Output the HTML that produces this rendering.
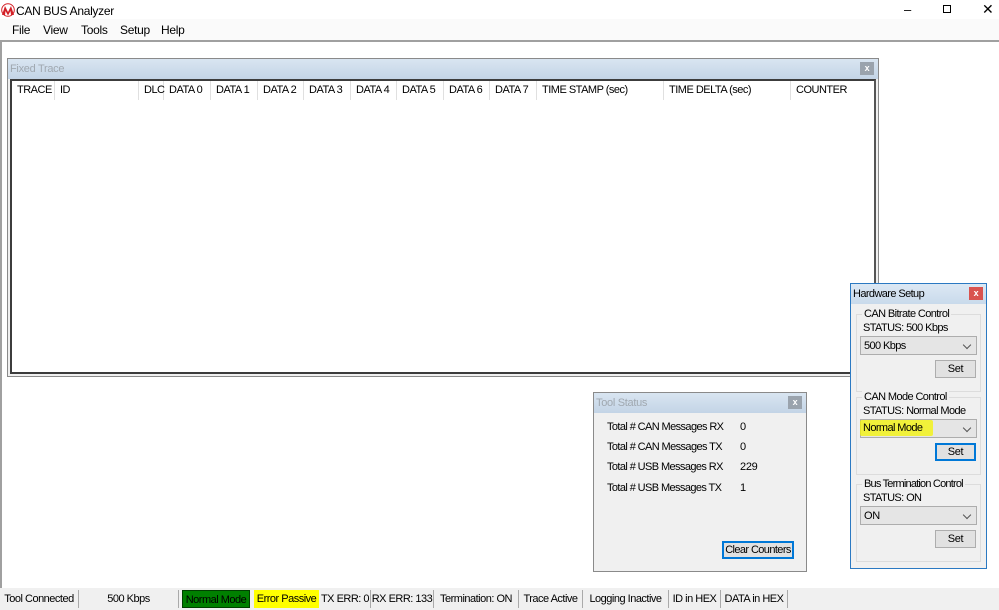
<!DOCTYPE html>
<html><head><meta charset="utf-8"><style>
*{margin:0;padding:0;box-sizing:border-box}
body{width:999px;height:610px;position:relative;overflow:hidden;background:#fff;font-family:"Liberation Sans",sans-serif;font-size:11px;color:#000;letter-spacing:-0.3px}
div{white-space:nowrap}
.a{position:absolute;white-space:nowrap}
.win{position:absolute;background:#f0f0f0;border:1px solid #8a8a8a}
.tb{position:absolute;left:0;right:0;top:0;height:20px;background:linear-gradient(#d9e5f1,#c3d4e6);}
.tb span{position:absolute;left:2px;top:4px;font-size:11px}
.xb{position:absolute;top:3px;width:14px;height:13px;background:#9aa3ad;color:#fff;font-size:9px;text-align:center;line-height:12px;font-weight:bold}
.btn{position:absolute;background:#e1e1e1;border:1px solid #adadad;text-align:center;font-size:11px;line-height:19px}
.sel{position:absolute;background:#e5e5e5;border:1px solid #adadad;font-size:11px;line-height:18px;padding-left:3px}
.sel:after{content:"";position:absolute;right:6px;top:5px;width:5px;height:5px;border-right:1px solid #555;border-bottom:1px solid #555;transform:rotate(45deg)}
.grp{position:absolute;border:1px solid #dcdcdc}
.hd{position:absolute;top:0;height:19px;border-right:1px solid #e0e0e0;line-height:19px;padding-left:5px;font-size:11px;letter-spacing:-0.5px}
.sb{position:absolute;top:590px;height:18px;line-height:18px;font-size:11px;border-right:1px solid #aaa;text-align:center;letter-spacing:-0.5px}
.hw{letter-spacing:-0.6px}
</style></head><body>
<svg class="a" style="left:1px;top:3px" width="14" height="14" viewBox="0 0 14 14"><path d="M1 12 L4 3 L7 9 L10 3 L13 12 L10 12 L9.5 8 L7 12.5 L4.5 8 L4 12 Z" fill="#d32027"/><circle cx="7" cy="7" r="6.3" fill="none" stroke="#d32027" stroke-width="1"/></svg>
<div class="a" style="left:16px;top:4px;font-size:12px">CAN BUS Analyzer</div>
<div class="a" style="left:904px;top:2px;font-size:13px">–</div>
<div class="a" style="left:943px;top:5px;width:8px;height:8px;border:1px solid #000"></div>
<div class="a" style="left:982px;top:1px;font-size:14px">✕</div>
<div class="a" style="left:0;top:19px;width:999px;height:21px;background:#fafafa"></div>
<div class="a" style="left:12px;top:23px;font-size:12px">File</div>
<div class="a" style="left:43px;top:23px;font-size:12px">View</div>
<div class="a" style="left:81px;top:23px;font-size:12px">Tools</div>
<div class="a" style="left:120px;top:23px;font-size:12px">Setup</div>
<div class="a" style="left:161px;top:23px;font-size:12px">Help</div>
<div class="a" style="left:0;top:40px;width:999px;height:2px;background:#a0a0a0"></div>
<div class="a" style="left:0;top:40px;width:2px;height:548px;background:#a0a0a0"></div>
<div class="win" style="left:7px;top:58px;width:872px;height:319px">
 <div class="tb"><span style="color:#a0a8b0">Fixed Trace</span><div class="xb" style="right:4px">x</div></div>
 <div class="a" style="left:2px;top:20px;width:866px;height:295px;background:#fff;border:2px solid #3c3c3c;border-right-color:#555;">
  <div class="hd" style="left:0;width:43px">TRACE</div>
  <div class="hd" style="left:43px;width:84px">ID</div>
  <div class="hd" style="left:127px;width:25px;text-align:right;padding-right:1px">DLC</div>
  <div class="hd" style="left:152px;width:47px">DATA 0</div>
  <div class="hd" style="left:199px;width:47px">DATA 1</div>
  <div class="hd" style="left:246px;width:46px">DATA 2</div>
  <div class="hd" style="left:292px;width:47px">DATA 3</div>
  <div class="hd" style="left:339px;width:46px">DATA 4</div>
  <div class="hd" style="left:385px;width:47px">DATA 5</div>
  <div class="hd" style="left:432px;width:46px">DATA 6</div>
  <div class="hd" style="left:478px;width:47px">DATA 7</div>
  <div class="hd" style="left:525px;width:127px">TIME STAMP (sec)</div>
  <div class="hd" style="left:652px;width:127px">TIME DELTA (sec)</div>
  <div class="hd" style="left:779px;width:85px;border-right:none">COUNTER</div>
 </div>
</div>
<div class="win" style="left:593px;top:392px;width:214px;height:180px">
 <div class="tb"><span style="color:#a0a8b0">Tool Status</span><div class="xb" style="right:4px">x</div></div>
 <div class="a hw" style="left:13px;top:28px">Total # CAN Messages RX</div><div class="a" style="left:146px;top:28px">0</div>
 <div class="a hw" style="left:13px;top:48px">Total # CAN Messages TX</div><div class="a" style="left:146px;top:48px">0</div>
 <div class="a hw" style="left:13px;top:68px">Total # USB Messages RX</div><div class="a" style="left:146px;top:68px">229</div>
 <div class="a hw" style="left:13px;top:89px">Total # USB Messages TX</div><div class="a" style="left:146px;top:89px">1</div>
 <div class="btn hw" style="left:128px;top:148px;width:72px;height:18px;line-height:14px;border:2px solid #0078d7">Clear Counters</div>
</div>
<div class="win" style="left:850px;top:283px;width:137px;height:286px;border-color:#2b79c2">
 <div class="tb" style="background:linear-gradient(#dce8f4,#c9daeb)"><span class="hw">Hardware Setup</span><div class="xb" style="right:3px;background:#d9534f">x</div></div>
 <div class="grp" style="left:5px;top:30px;width:125px;height:78px"></div>
 <div class="a hw" style="left:11px;top:24px;background:#f0f0f0;padding:0 2px">CAN Bitrate Control</div>
 <div class="a hw" style="left:12px;top:38px">STATUS: 500 Kbps</div>
 <div class="sel hw" style="left:9px;top:52px;width:117px;height:19px">500 Kbps</div>
 <div class="btn" style="left:84px;top:76px;width:41px;height:18px;line-height:16px">Set</div>
 <div class="grp" style="left:5px;top:113px;width:125px;height:78px"></div>
 <div class="a hw" style="left:11px;top:107px;background:#f0f0f0;padding:0 2px">CAN Mode Control</div>
 <div class="a hw" style="left:12px;top:121px">STATUS: Normal Mode</div>
 <div class="sel" style="left:9px;top:135px;width:117px;height:19px"></div>
 <div class="a" style="left:9px;top:136px;width:73px;height:16px;background:#f4f400;opacity:.75;border-radius:2px"></div>
 <div class="a hw" style="left:12px;top:138px">Normal Mode</div>
 <div class="btn" style="left:84px;top:159px;width:41px;height:18px;line-height:14px;border:2px solid #0078d7">Set</div>
 <div class="grp" style="left:5px;top:200px;width:125px;height:78px"></div>
 <div class="a hw" style="left:11px;top:194px;background:#f0f0f0;padding:0 2px;letter-spacing:-0.8px">Bus Termination Control</div>
 <div class="a hw" style="left:12px;top:208px">STATUS: ON</div>
 <div class="sel" style="left:9px;top:222px;width:117px;height:19px">ON</div>
 <div class="btn" style="left:84px;top:246px;width:41px;height:18px;line-height:16px">Set</div>
</div>
<div class="a" style="left:0;top:588px;width:999px;height:22px;background:#f0f0f0"></div>
<div class="sb" style="left:0;width:79px">Tool Connected</div>
<div class="sb" style="left:79px;width:100px">500 Kbps</div>
<div class="sb" style="left:182px;width:68px;background:#008000;border:1px solid #004000">Normal Mode</div>
<div class="sb" style="left:254px;width:65px;background:#ffff00;border:none">Error Passive</div>
<div class="sb" style="left:320px;width:51px">TX ERR: 0</div>
<div class="sb" style="left:371px;width:63px">RX ERR: 133</div>
<div class="sb" style="left:434px;width:85px">Termination: ON</div>
<div class="sb" style="left:519px;width:64px">Trace Active</div>
<div class="sb" style="left:583px;width:86px">Logging Inactive</div>
<div class="sb" style="left:669px;width:52px">ID in HEX</div>
<div class="sb" style="left:721px;width:67px">DATA in HEX</div>
</body></html>
